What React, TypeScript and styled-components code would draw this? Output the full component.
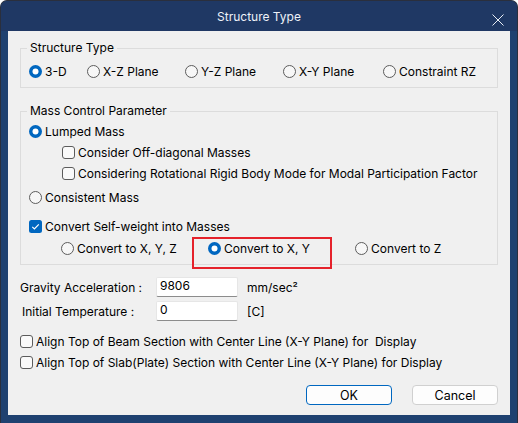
import React from "react";
import styled, { createGlobalStyle } from "styled-components";

const Global = createGlobalStyle`
  html, body { margin: 0; padding: 0; background: #ffffff; }
  body { font-family: Inter, "Noto Sans CJK KR", "Noto Sans", sans-serif; font-size: 12px; color: #000; }
  * { box-sizing: border-box; }
`;

const Window = styled.div`
  width: 518px;
  height: 423px;
  background: #1f4170;
  border-radius: 7px 7px 0 0;
  border: 1px solid #2a2f3d;
  border-bottom: none;
  display: flex;
  flex-direction: column;
  overflow: hidden;
`;

const TitleBar = styled.div`
  height: 30px;
  background: #1f3864;
  position: relative;
  display: flex;
  align-items: center;
  justify-content: center;
  color: #eef2f8;
  font-size: 12px;
  padding-top: 1px;
`;

const CloseBtn = styled.div`
  position: absolute;
  right: 13px;
  top: 13px;
  width: 12px;
  height: 12px;
  display: flex;
`;

const Body = styled.div`
  margin: 0 7px 8px 7px;
  flex: 1;
  background: #f0f0f0;
  padding: 17px 12px 0 12px;
  display: flex;
  flex-direction: column;
`;

const Group = styled.div<{ $h: number; $pt: number; $mt?: number }>`
  position: relative;
  border: 1px solid #dcdcdc;
  height: ${(p) => p.$h}px;
  padding: ${(p) => p.$pt}px 8px 0 8px;
  margin-top: ${(p) => p.$mt ?? 0}px;
  display: flex;
  flex-direction: column;
`;

const Legend = styled.div`
  position: absolute;
  left: 6px;
  top: -9px;
  padding: 0 3px;
  background: #f0f0f0;
  line-height: 16px;
`;

const Row = styled.div<{ $mt?: number; $ml?: number }>`
  display: flex;
  align-items: center;
  height: 20px;
  margin-top: ${(p) => p.$mt ?? 0}px;
  margin-left: ${(p) => p.$ml ?? 0}px;
`;

const Item = styled.div<{ $w?: number }>`
  display: flex;
  align-items: center;
  gap: 3px;
  width: ${(p) => (p.$w ? `${p.$w}px` : "auto")};
  flex: none;
  white-space: nowrap;
`;

const Highlight = styled(Item)`
  position: relative;
  &::after {
    content: "";
    position: absolute;
    left: -16px;
    top: -4px;
    width: 136px;
    height: 28px;
    border: 2px solid #e5222b;
  }
`;

const FieldGrid = styled.div`
  display: grid;
  grid-template-columns: 127px 82px auto;
  column-gap: 9px;
  row-gap: 4px;
  align-items: center;
  margin-top: 12px;
`;

const Label = styled.div<{ $ml?: number }>`
  margin-left: ${(p) => p.$ml ?? 0}px;
  white-space: nowrap;
`;

const Input = styled.div`
  height: 20px;
  background: #ffffff;
  border: 1px solid #e6e6e6;
  border-bottom: 1px solid #8c8c8c;
  border-radius: 2px;
  padding: 0 3px;
  line-height: 16px;
`;

const Buttons = styled.div`
  display: flex;
  justify-content: flex-end;
  gap: 20px;
  margin-top: 13px;
`;

const Button = styled.div<{ $primary?: boolean }>`
  width: 86px;
  height: 20px;
  border-radius: 4px;
  background: #fdfdfd;
  border: ${(p) => (p.$primary ? "1.5px solid #0067c0" : "1px solid #d0d0d0")};
  display: flex;
  align-items: center;
  justify-content: center;
  font-size: 12.5px;
`;

const Radio = ({ on }: { on?: boolean }) => (
  <svg width="13" height="13" viewBox="0 0 13 13" style={{ flex: "none" }}>
    {on ? (
      <>
        <circle cx="6.5" cy="6.5" r="6.5" fill="#0067c0" />
        <circle cx="6.5" cy="6.5" r="3" fill="#ffffff" />
      </>
    ) : (
      <circle cx="6.5" cy="6.5" r="6" fill="#f7f7f7" stroke="#5c5c5c" strokeWidth="1" />
    )}
  </svg>
);

const Check = ({ on }: { on?: boolean }) => (
  <svg width="13" height="13" viewBox="0 0 13 13" style={{ flex: "none" }}>
    {on ? (
      <>
        <rect x="0" y="0" width="13" height="13" rx="2.5" fill="#0067c0" />
        <path d="M3.3 6.8 L5.4 8.9 L9.8 4.3" fill="none" stroke="#ffffff" strokeWidth="1.2" />
      </>
    ) : (
      <rect x="0.5" y="0.5" width="12" height="12" rx="2.5" fill="#fafafa" stroke="#5c5c5c" strokeWidth="1" />
    )}
  </svg>
);

export default function App() {
  return (
    <>
      <Global />
      <Window>
        <TitleBar>
          Structure Type
          <CloseBtn>
            <svg width="12" height="12" viewBox="0 0 12 12">
              <path d="M0.5 0.5 L11.5 11.5 M11.5 0.5 L0.5 11.5" stroke="#e8edf5" strokeWidth="1" />
            </svg>
          </CloseBtn>
        </TitleBar>
        <Body>
          <Group $h={40} $pt={12}>
            <Legend>Structure Type</Legend>
            <Row>
              <Item $w={58}>
                <Radio on />
                3-D
              </Item>
              <Item $w={98}>
                <Radio />
                X-Z Plane
              </Item>
              <Item $w={98}>
                <Radio />
                Y-Z Plane
              </Item>
              <Item $w={100}>
                <Radio />
                X-Y Plane
              </Item>
              <Item>
                <Radio />
                Constraint RZ
              </Item>
            </Row>
          </Group>

          <Group $h={154} $pt={9} $mt={23}>
            <Legend>Mass Control Parameter</Legend>
            <Row>
              <Item>
                <Radio on />
                Lumped Mass
              </Item>
            </Row>
            <Row $mt={1} $ml={33}>
              <Item>
                <Check />
                Consider Off-diagonal Masses
              </Item>
            </Row>
            <Row $mt={1} $ml={33}>
              <Item>
                <Check />
                Considering Rotational Rigid Body Mode for Modal Participation Factor
              </Item>
            </Row>
            <Row $mt={4}>
              <Item>
                <Radio />
                Consistent Mass
              </Item>
            </Row>
            <Row $mt={9}>
              <Item>
                <Check on />
                Convert Self-weight into Masses
              </Item>
            </Row>
            <Row $mt={2} $ml={32}>
              <Item $w={147}>
                <Radio />
                Convert to X, Y, Z
              </Item>
              <Highlight $w={147}>
                <Radio on />
                Convert to X, Y
              </Highlight>
              <Item>
                <Radio />
                Convert to Z
              </Item>
            </Row>
          </Group>

          <FieldGrid>
            <Label>Gravity Acceleration :</Label>
            <Input>9806</Input>
            <Label>mm/sec²</Label>
            <Label $ml={2}>Initial Temperature :</Label>
            <Input>0</Input>
            <Label>[C]</Label>
          </FieldGrid>

          <Row $mt={10}>
            <Item>
              <Check />
              Align Top of Beam Section with Center Line (X-Y Plane) for&nbsp; Display
            </Item>
          </Row>
          <Row $mt={1}>
            <Item>
              <Check />
              Align Top of Slab(Plate) Section with Center Line (X-Y Plane) for Display
            </Item>
          </Row>

          <Buttons>
            <Button $primary>OK</Button>
            <Button>Cancel</Button>
          </Buttons>
        </Body>
      </Window>
    </>
  );
}
